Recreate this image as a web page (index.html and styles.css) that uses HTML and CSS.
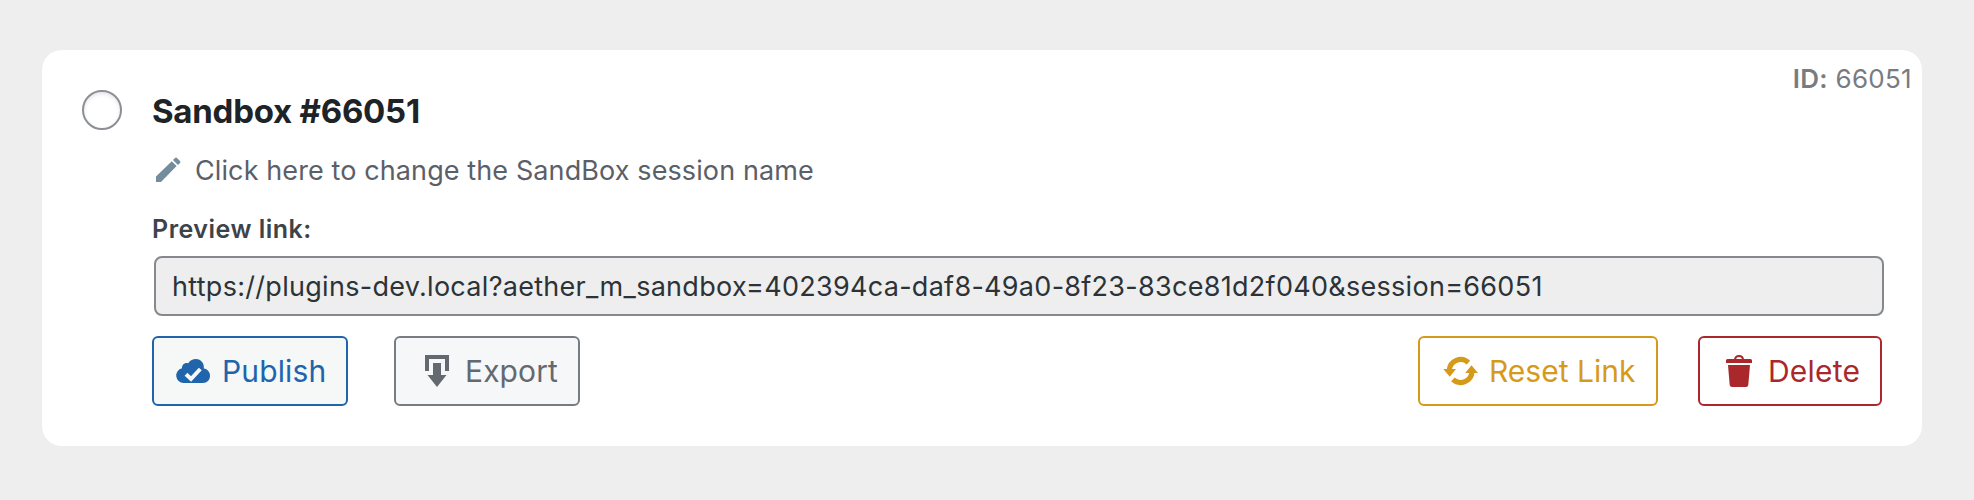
FILE: index.html
```html
<!DOCTYPE html>
<html lang="en">
<head>
<meta charset="utf-8">
<title>Sandbox #66051</title>
<link rel="stylesheet" href="styles.css">
</head>
<body>
<article class="card">
  <input class="radio" type="radio" name="sandbox" aria-label="Sandbox #66051">
  <div class="content">
    <h2 class="title">Sandbox #66051</h2>
    <div class="rename">
      <svg class="icon-pencil" width="26" height="26" viewBox="0 0 26 26"><path d="M0 25V19.5L15.8 4.2 20.6 9 5 25ZM17 3 19 1Q20 .2 21 1L24 4Q25 5 24 6L22 8Z"/></svg>
      <span class="rename-text">Click here to change the SandBox session name</span>
    </div>
    <label class="label" for="link">Preview link:</label>
    <input class="link" id="link" type="text" readonly value="https://plugins-dev.local?aether_m_sandbox=402394ca-daf8-49a0-8f23-83ce81d2f040&amp;session=66051">
    <div class="actions">
      <button class="btn publish" type="button">
        <svg width="34" height="24" viewBox="0 0 34 24"><path d="M7.5 24A7.5 7.5 0 0 1 6 9.2C5.6 5.6 9 3.2 12.2 4.2 14 1.4 17 0 20 0 25 0 28.6 4.6 27.8 9.6 31.4 10.2 34 13 34 16.8 34 21 31 24 27 24Z"/><path class="check" d="M10 15.2 15 20 24.3 10"/></svg>
        <span>Publish</span>
      </button>
      <button class="btn export" type="button">
        <svg width="24" height="32" viewBox="0 0 24 32"><path d="M0 0H24V16H20V4H4V16H0ZM8 8H16V20H21.5L12 32 2.5 20H8Z"/></svg>
        <span>Export</span>
      </button>
      <button class="btn reset" type="button">
        <svg width="36" height="28" viewBox="0 0 36 28"><path class="arc" d="M6.3 13.4A11.4 11.4 0 0 1 25.4 5.6M29 14.6A11.4 11.4 0 0 1 9.9 22.4"/><path d="M.2 12H13L6.8 19.8ZM22.2 16H35L28.5 8.2Z"/></svg>
        <span>Reset Link</span>
      </button>
      <button class="btn delete" type="button">
        <svg width="26" height="32" viewBox="0 0 26 32"><path d="M0 8V5.5Q0 4 1.5 4H24.500Q26 4 26 5.500V8ZM2 10H24L22.300 30Q22 32 20 32H6Q4 32 3.700 30Z"/><path class="handle" d="M9 5C9 2.200 10.700 1 13 1S17 2.200 17 5"/></svg>
        <span>Delete</span>
      </button>
    </div>
  </div>
  <div class="card-id"><b>ID:</b> 66051</div>
</article>
</body>
</html>
```
FILE: styles.css
```css
* { box-sizing: border-box; }

body {
  margin: 0;
  padding: 50px 52px 54px 42px;
  min-height: 500px;
  background: #eee;
  font-family: Inter, "Liberation Sans", sans-serif;
}

.card {
  position: relative;
  display: flex;
  align-items: flex-start;
  height: 396px;
  padding: 37px 38px 40px 40px;
  border-radius: 20px;
  background: #fff;
}

.radio {
  appearance: none;
  flex: none;
  width: 40px;
  height: 40px;
  margin: 3px 30px 0 0;
  border: 2px solid #8c8f94;
  border-radius: 50%;
  background: #fff;
  box-shadow: inset 0 2px 4px rgba(0, 0, 0, .1);
}

.content { flex: 1; min-width: 0; }

.title {
  margin: 0 0 15px;
  color: #1d2327;
  font-size: 33px;
  font-weight: 700;
  line-height: 48px;
  letter-spacing: -.24px;
}

.rename {
  display: flex;
  align-items: center;
  height: 40px;
  margin-bottom: 23px;
  padding-left: 4px;
}

.icon-pencil { flex: none; fill: #738d9d; }

.rename-text {
  margin-left: 13px;
  padding-top: 2px;
  color: #5b6068;
  font-size: 27px;
  line-height: 40px;
  letter-spacing: .105px;
}

.label {
  display: block;
  margin-bottom: 11px;
  color: #3c434a;
  font-size: 25px;
  font-weight: 600;
  line-height: 32px;
  letter-spacing: .5px;
}

.link {
  display: block;
  width: 1730px;
  height: 60px;
  margin: 0 0 20px 2px;
  padding: 0 16px;
  border: 2px solid #85888d;
  border-radius: 8px;
  background: #eee;
  color: #2c3338;
  font: 27px/40px Inter, "Liberation Sans", sans-serif;
  letter-spacing: .29px;
}

.actions { display: flex; width: 1730px; }

.btn {
  display: flex;
  align-items: center;
  height: 70px;
  padding: 0 0 0 22px;
  border: 2px solid currentColor;
  border-radius: 6px;
  background: #fff;
  font: 30px/44px Inter, "Liberation Sans", sans-serif;
  white-space: nowrap;
}

.btn svg { flex: none; fill: currentColor; overflow: visible; }

.publish { width: 196px; background: #f6f7f7; color: #2065ab; letter-spacing: .14px; }
.publish span { margin-left: 12px; }
.check { fill: none; stroke: #f6f7f7; stroke-width: 4; }

.export { width: 186px; margin-left: 46px; padding-left: 29px; border-color: #787c82; background: #f6f7f9; color: #646970; letter-spacing: .1px; }
.export span { margin-left: 16px; }

.reset { width: 240px; margin-left: auto; padding-left: 23px; color: #d69a1a; }
.reset span { margin-left: 10px; }
.arc { fill: none; stroke: currentColor; stroke-width: 5.2; }

.delete { width: 184px; margin-left: 40px; padding-left: 26px; color: #aa282b; letter-spacing: .2px; }
.delete span { margin-left: 16px; }
.handle { fill: none; stroke: currentColor; stroke-width: 2; }

.card-id {
  position: absolute;
  top: 13px;
  right: 10px;
  color: #787c82;
  font-size: 26px;
  line-height: 32px;
  letter-spacing: .3px;
}

.card-id b { font-weight: 600; }
```
